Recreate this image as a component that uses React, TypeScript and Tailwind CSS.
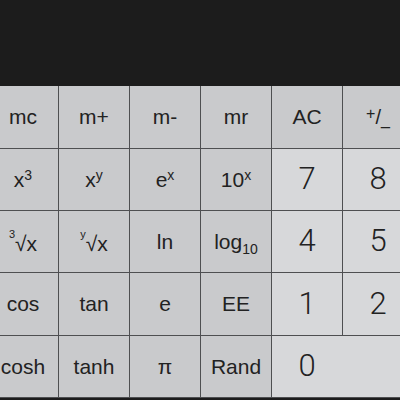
import React from 'react';

type Key = {
  label: React.ReactNode;
  kind: 'fn' | 'num';
  span?: boolean;
};

const Sup = ({ children }: { children: React.ReactNode }) => (
  <span className="align-[0.5em] text-[14px] leading-none">{children}</span>
);

const Root = ({ n }: { n: string }) => (
  <span className="inline-flex items-start">
    <span className="text-[11px] leading-none">{n}</span>
    <span className="pt-[4px] leading-none">√x</span>
  </span>
);

const keys: Key[] = [
  { label: 'mc', kind: 'fn' },
  { label: 'm+', kind: 'fn' },
  { label: 'm-', kind: 'fn' },
  { label: 'mr', kind: 'fn' },
  { label: 'AC', kind: 'fn' },
  {
    label: (
      <span className="inline-flex h-[22px] items-center">
        <span className="self-start text-[16px] leading-none">+</span>
        <span className="text-[20px] leading-none">/</span>
        <span className="self-end text-[16px] leading-none">_</span>
      </span>
    ),
    kind: 'fn',
  },
  { label: <span>x<Sup>3</Sup></span>, kind: 'fn' },
  { label: <span>x<Sup>y</Sup></span>, kind: 'fn' },
  { label: <span>e<Sup>x</Sup></span>, kind: 'fn' },
  { label: <span>10<Sup>x</Sup></span>, kind: 'fn' },
  { label: '7', kind: 'num' },
  { label: '8', kind: 'num' },
  { label: <Root n="3" />, kind: 'fn' },
  { label: <Root n="y" />, kind: 'fn' },
  { label: 'ln', kind: 'fn' },
  {
    label: (
      <span>
        log<span className="align-[-0.35em] text-[14px] leading-none">10</span>
      </span>
    ),
    kind: 'fn',
  },
  { label: '4', kind: 'num' },
  { label: '5', kind: 'num' },
  { label: 'cos', kind: 'fn' },
  { label: 'tan', kind: 'fn' },
  { label: 'e', kind: 'fn' },
  { label: 'EE', kind: 'fn' },
  { label: '1', kind: 'num' },
  { label: '2', kind: 'num' },
  { label: 'cosh', kind: 'fn' },
  { label: 'tanh', kind: 'fn' },
  { label: 'π', kind: 'fn' },
  { label: 'Rand', kind: 'fn' },
  { label: '0', kind: 'num', span: true },
];

export default function App() {
  return (
    <div className="w-[400px] h-[400px] overflow-hidden bg-[#1c1c1c] font-['Liberation_Sans',Arial,sans-serif] text-[#222]">
      <div className="h-[86px]" />
      <div className="-ml-[12px] w-[425px] pb-px bg-[#4e4f51]">
        <div className="grid grid-cols-[repeat(6,70px)] grid-rows-[62px_61px_61px_62px_61px] gap-px">
          {keys.map((k, i) =>
            k.kind === 'num' ? (
              <div
                key={i}
                className={
                  k.span
                    ? 'col-span-2 flex items-center bg-[#d7d8da]'
                    : 'flex items-center justify-center bg-[#d7d8da]'
                }>
                <span
                  className={
                    k.span
                      ? "w-[70px] text-center font-['Roboto',sans-serif] font-light text-[31px]"
                      : "font-['Roboto',sans-serif] font-light text-[31px]"
                  }>
                  {k.label}
                </span>
              </div>
            ) : (
              <div key={i} className="flex items-center justify-center bg-[#c9cacc] text-[21px]">
                {k.label}
              </div>
            ),
          )}
        </div>
      </div>
    </div>
  );
}
